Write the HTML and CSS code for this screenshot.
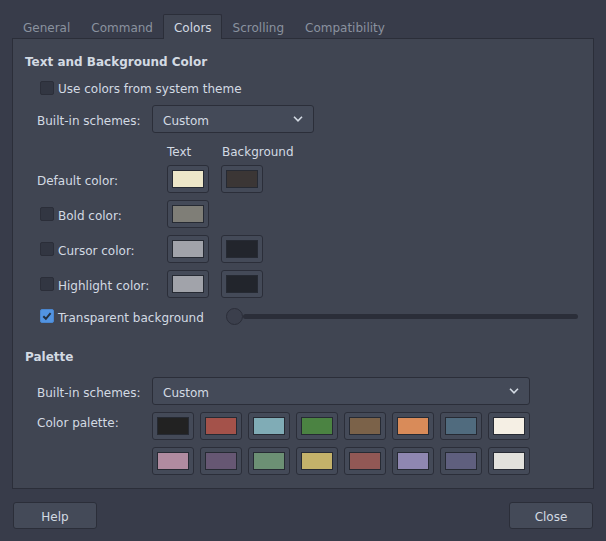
FILE: index.html
```html
<!DOCTYPE html>
<html>
<head>
<meta charset="utf-8">
<link rel="stylesheet" href="styles.css">
</head>
<body>
<div class="dialog">
  <div class="tabs">
    <div class="tab">General</div>
    <div class="tab">Command</div>
    <div class="tab active">Colors</div>
    <div class="tab">Scrolling</div>
    <div class="tab">Compatibility</div>
  </div>
  <div class="panel">
    <div class="title t1">Text and Background Color</div>
    <div class="row r-use">
      <span class="cb"></span><span class="cb-text">Use colors from system theme</span>
    </div>
    <div class="row r-scheme1">
      <span class="lbl-scheme">Built-in schemes:</span>
      <div class="combo combo-narrow"><span class="combo-text">Custom</span><svg class="chev" width="10" height="6" viewBox="0 0 10 6"><path d="M1 0.8 L5 4.8 L9 0.8" fill="none" stroke="#d3dae3" stroke-width="1.6"/></svg></div>
    </div>
    <div class="row r-head">
      <span class="lbl-color"></span>
      <span class="hdr hdr-text">Text</span>
      <span class="hdr hdr-bg">Background</span>
    </div>
    <div class="row r-color r-first">
      <span class="lbl-color"><span class="lbl-text">Default color:</span></span>
      <span class="sw"><i style="background:#ede7c9"></i></span>
      <span class="sw"><i style="background:#3b3635"></i></span>
    </div>
    <div class="row r-color">
      <span class="lbl-color"><span class="cb"></span><span class="cb-text">Bold color:</span></span>
      <span class="sw"><i style="background:#7f7e77"></i></span>
    </div>
    <div class="row r-color">
      <span class="lbl-color"><span class="cb"></span><span class="cb-text">Cursor color:</span></span>
      <span class="sw"><i style="background:#a1a3aa"></i></span>
      <span class="sw"><i style="background:#22252c"></i></span>
    </div>
    <div class="row r-color">
      <span class="lbl-color"><span class="cb"></span><span class="cb-text">Highlight color:</span></span>
      <span class="sw"><i style="background:#a1a3aa"></i></span>
      <span class="sw"><i style="background:#22252c"></i></span>
    </div>
    <div class="row r-trans">
      <span class="cb checked"><svg width="14" height="14" viewBox="0 0 14 14"><path d="M3.3 7.2 L5.9 9.8 L10.6 4.2" fill="none" stroke="#243040" stroke-width="2"/></svg></span><span class="cb-text">Transparent background</span>
      <div class="slider"><span class="handle"></span><span class="track"></span></div>
    </div>
    <div class="title t2">Palette</div>
    <div class="row r-scheme2">
      <span class="lbl-scheme">Built-in schemes:</span>
      <div class="combo combo-wide"><span class="combo-text">Custom</span><svg class="chev" width="10" height="6" viewBox="0 0 10 6"><path d="M1 0.8 L5 4.8 L9 0.8" fill="none" stroke="#d3dae3" stroke-width="1.6"/></svg></div>
    </div>
    <div class="row r-pal">
      <span class="lbl-scheme lbl-top">Color palette:</span>
      <div class="palette">
        <span class="sw"><i style="background:#222222"></i></span>
        <span class="sw"><i style="background:#a4524a"></i></span>
        <span class="sw"><i style="background:#80acb6"></i></span>
        <span class="sw"><i style="background:#4b8342"></i></span>
        <span class="sw"><i style="background:#7b6249"></i></span>
        <span class="sw"><i style="background:#d98b59"></i></span>
        <span class="sw"><i style="background:#506b7e"></i></span>
        <span class="sw"><i style="background:#f5efe4"></i></span>
        <span class="sw"><i style="background:#b08ba0"></i></span>
        <span class="sw"><i style="background:#665773"></i></span>
        <span class="sw"><i style="background:#6c9074"></i></span>
        <span class="sw"><i style="background:#c4b26a"></i></span>
        <span class="sw"><i style="background:#915855"></i></span>
        <span class="sw"><i style="background:#8f87b1"></i></span>
        <span class="sw"><i style="background:#5f5f7e"></i></span>
        <span class="sw"><i style="background:#e2e1dc"></i></span>
      </div>
    </div>
  </div>
  <div class="footer">
    <div class="btn">Help</div>
    <div class="btn">Close</div>
  </div>
</div>
</body>
</html>
```
FILE: styles.css
```css
* { box-sizing: border-box; }
html, body {
  margin: 0;
  padding: 0;
}
body {
  width: 606px;
  height: 541px;
  overflow: hidden;
  background: #383c4a;
  color: #d3dae3;
  font-family: "DejaVu Sans", sans-serif;
  font-size: 12px;
}
.dialog {
  padding: 14px 12px 0 12px;
}
.tabs {
  display: flex;
  height: 24px;
}
.tab {
  height: 24px;
  line-height: 19px;
  padding: 4px 9.5px 0 9.5px;
  border: 1px solid transparent;
  border-bottom: 0;
  color: #8a929f;
}
.tab:first-child { padding-left: 10px; }
.tab.active {
  position: relative;
  z-index: 1;
  height: 25px;
  background: #404552;
  border-color: #2b2e39;
  border-radius: 2px 2px 0 0;
  color: #d3dae3;
}
.panel {
  display: flex;
  flex-direction: column;
  height: 451px;
  background: #404552;
  border: 1px solid #2b2e39;
  padding: 0 12px;
}
.title {
  height: 16px;
  line-height: 16px;
  font-weight: bold;
}
.t1 { margin-top: 15px; }
.t2 { margin-top: 25px; }
.row {
  display: flex;
  align-items: center;
  padding-left: 12px;
}
.r-use { margin-top: 11px; height: 14px; }
.r-use .cb { margin-left: 3px; }
.cb {
  flex: none;
  width: 14px;
  height: 14px;
  border: 1px solid #2b2e39;
  border-radius: 2px;
  background: #323642;
}
.cb.checked {
  background: #5294e2;
  border-color: #4a86cf;
}
.cb.checked svg { display: block; margin: -1px; }
.cb-text, .lbl-text, .lbl-scheme, .combo-text, .hdr {
  padding-top: 3px;
}
.r-use .cb-text { padding-top: 1px; }
.cb-text { margin-left: 4px; }
.r-scheme1 { margin-top: 10px; height: 28px; }
.r-scheme2 { margin-top: 12px; height: 28px; }
.lbl-scheme {
  flex: none;
  width: 115px;
}
.combo {
  display: flex;
  align-items: center;
  justify-content: space-between;
  height: 28px;
  padding: 0 10px 0 10px;
  border: 1px solid #2b2e39;
  border-radius: 3px;
  background: #444a58;
}
.combo-narrow { width: 162px; }
.combo-wide { width: 378px; }
.chev { display: block; }
.r-head { margin-top: 10px; height: 15px; }
.lbl-color {
  flex: none;
  display: flex;
  align-items: center;
  width: 130px;
}
.lbl-color .cb { margin-left: 3px; }
.hdr-text { width: 54px; }
.hdr-bg { padding-left: 1px; }
.r-color { margin-top: 7px; height: 28px; gap: 12px; }
.r-color .lbl-color { margin-right: -12px; }
.sw {
  flex: none;
  display: block;
  width: 42px;
  height: 28px;
  padding: 4px;
  border: 1px solid #2b2e39;
  border-radius: 3px;
  background: #444a58;
}
.sw i {
  display: block;
  width: 100%;
  height: 100%;
  border: 1px solid #262a33;
}
.r-trans { margin-top: 10px; height: 16px; }
.r-trans .cb { margin-left: 3px; }
.slider {
  display: flex;
  align-items: center;
  width: 352px;
  height: 16px;
  margin-left: auto;
  margin-right: 3px;
}
.handle {
  flex: none;
  width: 17px;
  height: 17px;
  border-radius: 50%;
  background: #3b3f4c;
  border: 1px solid #2b2e39;
}
.track {
  flex: 1;
  height: 5px;
  border-radius: 3px;
  background: #2b2e39;
}
.r-pal {
  margin-top: 7px;
  align-items: flex-start;
}
.lbl-top { line-height: 20px; padding-top: 1px; }
.palette {
  display: grid;
  grid-template-columns: repeat(8, 42px);
  column-gap: 6px;
  row-gap: 7px;
}
.footer {
  display: flex;
  justify-content: space-between;
  margin-top: 13px;
  padding: 0 1px 0 1px;
}
.btn {
  width: 84px;
  height: 27px;
  line-height: 22px;
  padding-top: 3px;
  text-align: center;
  border: 1px solid #2b2e39;
  border-radius: 3px;
  background: #444a58;
}
```
